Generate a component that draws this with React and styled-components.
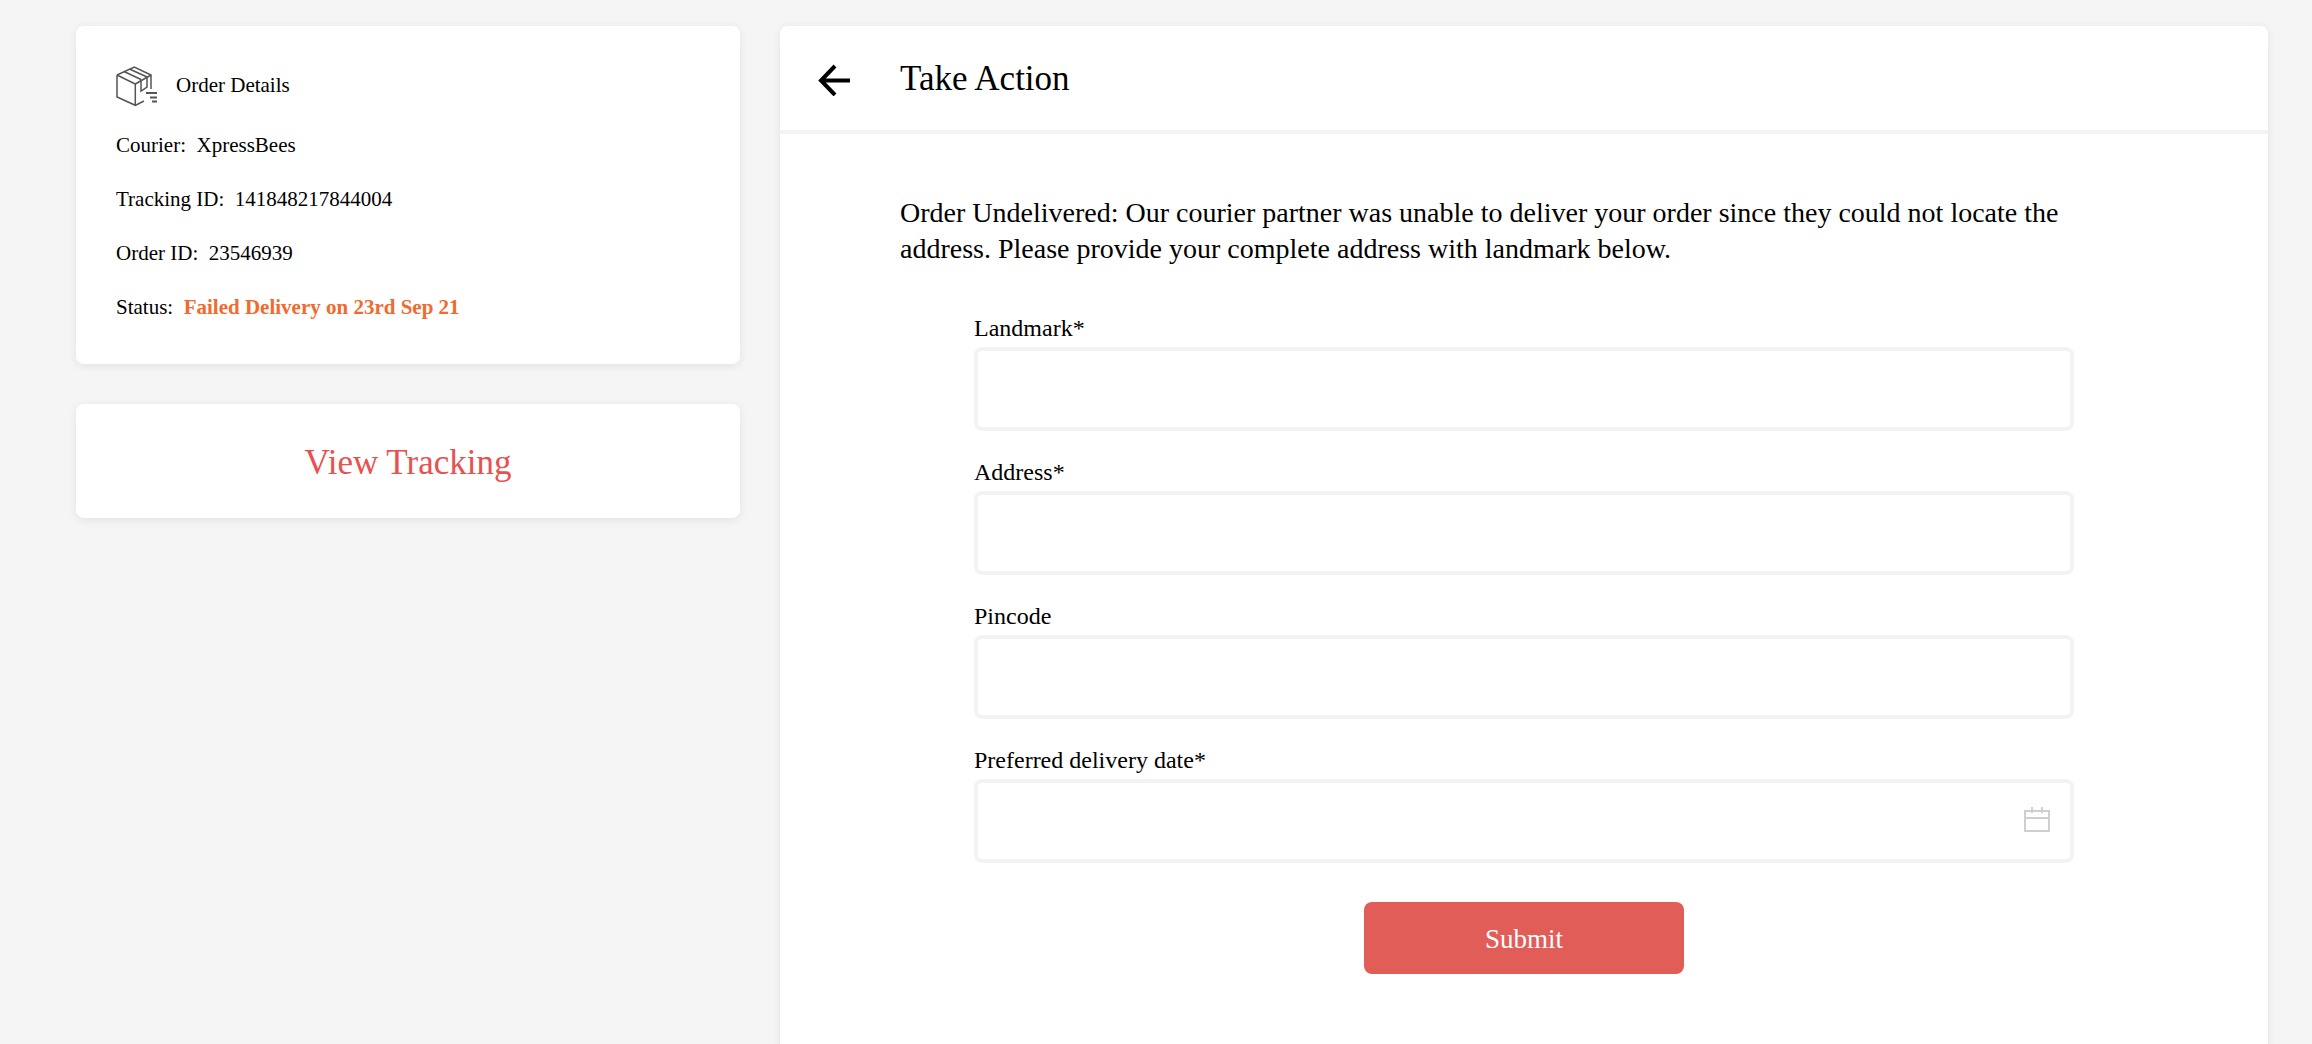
import React from "react";
import styled, { createGlobalStyle } from "styled-components";

const Global = createGlobalStyle`
  html, body { margin: 0; padding: 0; height: 100%; overflow: hidden; background: #f5f5f5; }
  body { font-family: "Liberation Serif", "Times New Roman", serif; color: #000; }
  * { box-sizing: border-box; }
`;

const Page = styled.div`
  display: grid;
  grid-template-columns: 664px 1488px;
  column-gap: 40px;
  padding: 26px 0 0 76px;
  height: 1044px;
  overflow: hidden;
  align-items: start;
`;
const Side = styled.aside`
  display: flex;
  flex-direction: column;
  gap: 40px;
`;
const Card = styled.section`
  background: #fff;
  border-radius: 8px;
  box-shadow: 0 2px 10px rgba(0, 0, 0, 0.08);
`;
const DetailsCard = styled(Card)`
  height: 338px;
  padding: 38px 40px 0;
`;
const DetailsHead = styled.div`
  display: flex;
  align-items: center;
  gap: 18px;
  height: 44px;
  font-size: 21px;
  line-height: 24px;
  margin-bottom: 25px;
`;
const HeadLabel = styled.span`
  position: relative;
  top: -1px;
`;
const Row = styled.p`
  margin: 0 0 30px;
  font-size: 21px;
  line-height: 24px;
  white-space: pre;
`;
const Failed = styled.span`
  color: #f26a2e;
  font-weight: 700;
`;
const TrackCard = styled(Card)`
  height: 114px;
  display: flex;
  align-items: center;
  justify-content: center;
  font-size: 35px;
  padding-top: 4px;
  color: #e8514f;
`;
const Main = styled(Card)`
  height: 1100px;
`;
const Header = styled.header`
  display: flex;
  align-items: center;
  height: 104px;
  padding-left: 36px;
  border-bottom: 4px solid #f3f3f3;
  box-sizing: content-box;
`;
const BackIcon = styled.svg`
  width: 36px;
  height: 36px;
  margin-right: 48px;
  flex: none;
`;
const Title = styled.h1`
  margin: 0;
  font-size: 35px;
  font-weight: 400;
  position: relative;
  top: 1px;
`;
const Body = styled.div`
  padding: 61px 0 0 120px;
`;
const Intro = styled.p`
  margin: 0 0 48px;
  width: 1200px;
  font-size: 28px;
  line-height: 36px;
`;
const Form = styled.form`
  width: 1100px;
  margin-left: 74px;
  display: flex;
  flex-direction: column;
`;
const Field = styled.div`
  display: flex;
  flex-direction: column;
  height: 144px;
`;
const Label = styled.label`
  font-size: 24px;
  line-height: 26px;
  height: 32px;
`;
const InputWrap = styled.div`
  position: relative;
  height: 84px;
`;
const Input = styled.input`
  width: 100%;
  height: 100%;
  border: 4px solid #f3f3f3;
  border-radius: 8px;
  background: #fff;
  outline: none;
`;
const CalIcon = styled.svg`
  position: absolute;
  right: 24px;
  top: 28px;
  width: 26px;
  height: 26px;
`;
const Submit = styled.button`
  align-self: center;
  width: 320px;
  height: 72px;
  margin-top: 11px;
  padding: 2px 0 0;
  border: none;
  border-radius: 8px;
  background: #e15d58;
  color: #fff;
  font-family: inherit;
  font-size: 27px;
`;

const BoxIcon = () => (
  <svg width="42" height="42" viewBox="0 0 42 42" fill="none" stroke="#555" strokeWidth="1.5">
    <path d="M1 10 L18.3 2 L35 10 V24 M1 10 V32 L19.3 40.3 L28 36 M1 10 L19.3 19 V40.3 M19.3 19 L35 10" />
    <path d="M8 6.5 L25 14.5 M13.5 4 L31 12 M25 14.5 V26 L31 22 V12" />
    <path d="M30 28 H41 M34 32.5 H41 M36 36.5 H41" strokeWidth="1.8" />
  </svg>
);

const fields = ["Landmark*", "Address*", "Pincode", "Preferred delivery date*"];

export default function App() {
  return (
    <>
      <Global />
      <Page>
        <Side>
          <DetailsCard>
            <DetailsHead>
              <BoxIcon />
              <HeadLabel>Order Details</HeadLabel>
            </DetailsHead>
            <Row>Courier:  XpressBees</Row>
            <Row>Tracking ID:  141848217844004</Row>
            <Row>Order ID:  23546939</Row>
            <Row>Status:  <Failed>Failed Delivery on 23rd Sep 21</Failed></Row>
          </DetailsCard>
          <TrackCard>View Tracking</TrackCard>
        </Side>
        <Main>
          <Header>
            <BackIcon viewBox="0 0 36 36" fill="none" stroke="#000" strokeWidth="4">
              <path d="M34 20.5 H5 M19 6 L5 20.5 L19 35" />
            </BackIcon>
            <Title>Take Action</Title>
          </Header>
          <Body>
            <Intro>
              Order Undelivered: Our courier partner was unable to deliver your order since they could not locate the address. Please provide your complete address with landmark below.
            </Intro>
            <Form>
              {fields.map((f, i) => (
                <Field key={f}>
                  <Label>{f}</Label>
                  <InputWrap>
                    <Input />
                    {i === 3 && (
                      <CalIcon viewBox="0 0 26 26" fill="none" stroke="#cfcfcf" strokeWidth="2">
                        <path d="M1 4 H25 V24 H1 Z M1 11 H25 M8 0 V6 M18 0 V6" />
                      </CalIcon>
                    )}
                  </InputWrap>
                </Field>
              ))}
              <Submit type="button">Submit</Submit>
            </Form>
          </Body>
        </Main>
      </Page>
    </>
  );
}
